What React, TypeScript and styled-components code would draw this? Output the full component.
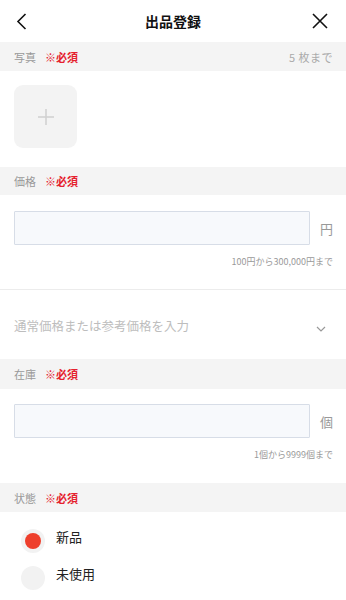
import React from "react";
import styled, { createGlobalStyle } from "styled-components";

const Global = createGlobalStyle`
  html, body { margin: 0; padding: 0; background: #fff; }
  body { font-family: "Noto Sans CJK JP", "Noto Sans", sans-serif; }
  * { box-sizing: border-box; }
`;

const Page = styled.div`
  width: 346px;
  background: #fff;
`;

const Header = styled.div`
  height: 42px;
  display: grid;
  grid-template-columns: 42px 1fr 42px;
  align-items: center;
`;

const IconButton = styled.div<{ $align: "start" | "end" }>`
  display: flex;
  justify-content: ${(p) => (p.$align === "start" ? "flex-start" : "flex-end")};
  padding: ${(p) => (p.$align === "start" ? "0 0 0 16px" : "0 18px 0 0")};
  align-items: center;
  height: 42px;
`;

const Title = styled.h1`
  margin: 0;
  font-size: 14px;
  font-weight: 700;
  color: #111;
  text-align: center;
`;

const SectionHeader = styled.div<{ $h?: number }>`
  height: ${(p) => p.$h ?? 29}px;
  background: #f4f4f4;
  display: flex;
  align-items: center;
  padding: 0 13px 0 14px;
`;

const SectionLabel = styled.span`
  font-size: 11px;
  color: #999;
  width: 31px;
`;

const Required = styled.span`
  font-size: 11px;
  font-weight: 700;
  color: #e5222e;
`;

const SectionNote = styled.span`
  margin-left: auto;
  font-size: 11px;
  color: #aaa;
  letter-spacing: 0.5px;
`;

const PhotoArea = styled.div`
  height: 96px;
  padding: 14px 14px 0;
`;

const AddBox = styled.div`
  width: 63px;
  height: 63px;
  border-radius: 9px;
  background: #f3f3f3;
  display: flex;
  align-items: center;
  justify-content: center;
`;

const FieldBlock = styled.div<{ $divider?: boolean }>`
  height: ${(p) => (p.$divider ? 95 : 94)}px;
  padding: ${(p) => (p.$divider ? 16 : 15)}px 13px 0 14px;
  border-bottom: ${(p) => (p.$divider ? "1px solid #ececec" : "none")};
`;

const InputRow = styled.div`
  display: flex;
  align-items: center;
`;

const TextInput = styled.div`
  width: 296px;
  height: 34px;
  background: #f7f9fc;
  border: 1.5px solid #d7dde7;
  border-radius: 1px;
`;

const Unit = styled.span`
  margin-left: auto;
  font-size: 13px;
  color: #999;
`;

const Helper = styled.div`
  margin-top: 10px;
  text-align: right;
  font-size: 9px;
  color: #9a9a9a;
`;

const SelectRow = styled.div`
  height: 69px;
  display: flex;
  align-items: center;
  padding: 1px 20px 0 14px;
`;

const Placeholder = styled.span`
  font-size: 12.5px;
  color: #bdbdbd;
`;

const Chevron = styled.span`
  margin-left: auto;
  display: flex;
  padding-top: 7px;
`;

const RadioList = styled.div`
  padding: 17px 0 0 21px;
  display: flex;
  flex-direction: column;
  gap: 13px;
`;

const RadioRow = styled.label`
  display: flex;
  align-items: center;
  gap: 11px;
`;

const RadioOuter = styled.span`
  width: 24px;
  height: 24px;
  border-radius: 50%;
  background: #f2f2f2;
  display: flex;
  align-items: center;
  justify-content: center;
`;

const RadioDot = styled.span`
  width: 16px;
  height: 16px;
  border-radius: 50%;
  background: #ee3f2c;
`;

const RadioLabel = styled.span`
  font-size: 13px;
  color: #222;
  margin-top: -9px;
`;

const Section = ({ label, note, h }: { label: string; note?: string; h?: number }) => (
  <SectionHeader $h={h}>
    <SectionLabel>{label}</SectionLabel>
    <Required>※必須</Required>
    {note && <SectionNote>{note}</SectionNote>}
  </SectionHeader>
);

export default function App() {
  return (
    <Page>
      <Global />
      <Header>
        <IconButton $align="start">
          <svg width="11" height="17" viewBox="0 0 11 17">
            <path d="M9.5 1 L2 8.5 L9.5 16" fill="none" stroke="#111" strokeWidth="1.6" />
          </svg>
        </IconButton>
        <Title>出品登録</Title>
        <IconButton $align="end">
          <svg width="16" height="16" viewBox="0 0 16 16">
            <path d="M1 1 L15 15 M15 1 L1 15" fill="none" stroke="#111" strokeWidth="1.6" />
          </svg>
        </IconButton>
      </Header>

      <Section label="写真" note="5 枚まで" />
      <PhotoArea>
        <AddBox>
          <svg width="16" height="16" viewBox="0 0 16 16">
            <path d="M8 0 V16 M0 8 H16" stroke="#d0d0d0" strokeWidth="1.5" />
          </svg>
        </AddBox>
      </PhotoArea>

      <Section label="価格" h={28} />
      <FieldBlock $divider>
        <InputRow>
          <TextInput />
          <Unit>円</Unit>
        </InputRow>
        <Helper>100円から300,000円まで</Helper>
      </FieldBlock>

      <SelectRow>
        <Placeholder>通常価格または参考価格を入力</Placeholder>
        <Chevron>
          <svg width="10" height="6" viewBox="0 0 10 6">
            <path d="M1 1 L5 5 L9 1" fill="none" stroke="#999" strokeWidth="1.2" />
          </svg>
        </Chevron>
      </SelectRow>

      <Section label="在庫" h={30} />
      <FieldBlock>
        <InputRow>
          <TextInput />
          <Unit>個</Unit>
        </InputRow>
        <Helper>1個から9999個まで</Helper>
      </FieldBlock>

      <Section label="状態" />
      <RadioList>
        <RadioRow>
          <RadioOuter>
            <RadioDot />
          </RadioOuter>
          <RadioLabel>新品</RadioLabel>
        </RadioRow>
        <RadioRow>
          <RadioOuter />
          <RadioLabel>未使用</RadioLabel>
        </RadioRow>
      </RadioList>
    </Page>
  );
}
